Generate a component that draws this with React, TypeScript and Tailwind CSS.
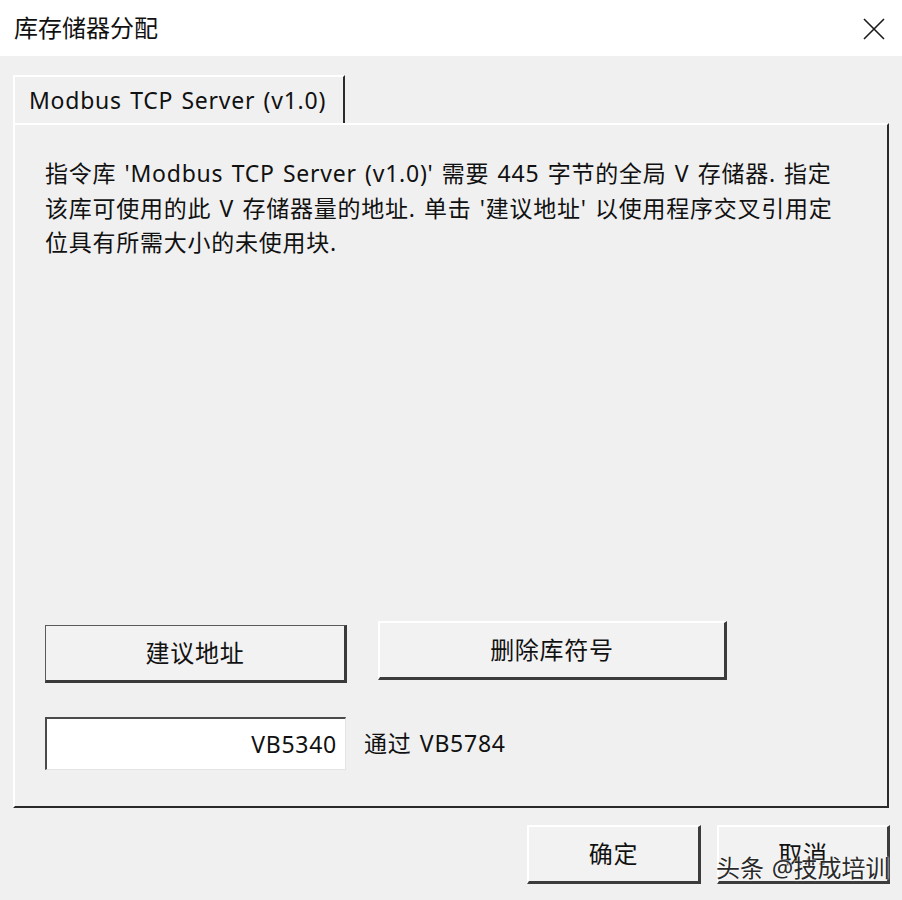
import React from "react";

const font = {
  fontFamily: '"Noto Sans", "Noto Sans CJK SC", sans-serif',
};

function RaisedButton({
  label,
  className,
}: {
  label: string;
  className: string;
}) {
  return (
    <div
      className={`flex items-center justify-center border-t-[2px] border-l-[2px] border-r-[3px] border-b-[3px] border-t-white border-l-white border-r-[#3c3c3c] border-b-[#3c3c3c] bg-[#f2f2f2] text-[24px] text-[#111] ${className}`}
    >
      {label}
    </div>
  );
}

export default function App() {
  return (
    <div
      style={font}
      className="relative h-[900px] w-[902px] overflow-hidden bg-[#f0f0f0] text-black tracking-[0.75px] [word-spacing:1.6px]"
    >
      {/* title bar */}
      <div className="flex h-[56px] items-center justify-between bg-white pl-[14px] pr-[17px]">
        <span className="text-[24px] leading-none tracking-normal text-[#111]">库存储器分配</span>
        <svg width="22" height="22" viewBox="0 0 22 22" className="mt-[1px]">
          <path d="M1 1 L21 21 M21 1 L1 21" stroke="#1a1a1a" strokeWidth="1.6" />
        </svg>
      </div>

      {/* tab header */}
      <div className="ml-[13px] mt-[19px] flex">
        <div className="flex h-[48px] w-[332px] items-center border-t-[2px] border-l-[2px] border-r-[2px] border-t-white border-l-white border-r-[#2a2a2a] pl-[14px] text-[23px] leading-none text-[#111]">
          Modbus TCP Server (v1.0)
        </div>
      </div>

      {/* tab panel */}
      <div className="ml-[13px] flex h-[685px] w-[876px] flex-col border-t-[2px] border-l-[2px] border-r-[2px] border-b-[2px] border-t-white border-l-white border-r-[#2a2a2a] border-b-[#2a2a2a] pl-[30px] pt-[31px]">
        <p className="text-[23px] leading-[34.5px] text-[#111]">
          指令库 'Modbus TCP Server (v1.0)' 需要 445 字节的全局 V 存储器. 指定
          <br />
          该库可使用的此 V 存储器量的地址. 单击 '建议地址' 以使用程序交叉引用定
          <br />
          位具有所需大小的未使用块.
        </p>

        <div className="mt-auto flex items-start gap-[31px]">
          <div className="mt-[4px] flex h-[58px] w-[302px] items-center justify-center border-t border-l border-r-[3px] border-b-[3px] border-t-[#5a5a5a] border-l-[#5a5a5a] border-r-[#3a3a3a] border-b-[#3a3a3a] bg-[#f2f2f2] text-[24px] text-[#111]">
            建议地址
          </div>
          <RaisedButton label="删除库符号" className="h-[59px] w-[349px]" />
        </div>

        <div className="mb-[36px] mt-[34px] flex items-center">
          <div className="flex h-[53px] w-[301px] items-center justify-end border-t-[2px] border-l-[2px] border-r border-b border-t-[#4a4a4a] border-l-[#4a4a4a] border-r-[#e4e4e4] border-b-[#e4e4e4] bg-white pr-[8px] text-[23px] text-[#111]">
            VB5340
          </div>
          <span className="ml-[18px] text-[23px] text-[#111]">通过 VB5784</span>
        </div>
      </div>

      {/* dialog buttons */}
      <div className="mt-[17px] flex justify-end gap-[16px] pr-[12px]">
        <RaisedButton label="确定" className="h-[59px] w-[174px]" />
        <RaisedButton label="取消" className="h-[59px] w-[173px]" />
      </div>

      {/* watermark */}
      <div className="absolute left-[716px] top-[852px] text-[24px] leading-[32px] tracking-normal text-[#2a2a2a] [text-shadow:0_0_2px_#fff,0_0_2px_#fff]">
        头条 @技成培训
      </div>
    </div>
  );
}
